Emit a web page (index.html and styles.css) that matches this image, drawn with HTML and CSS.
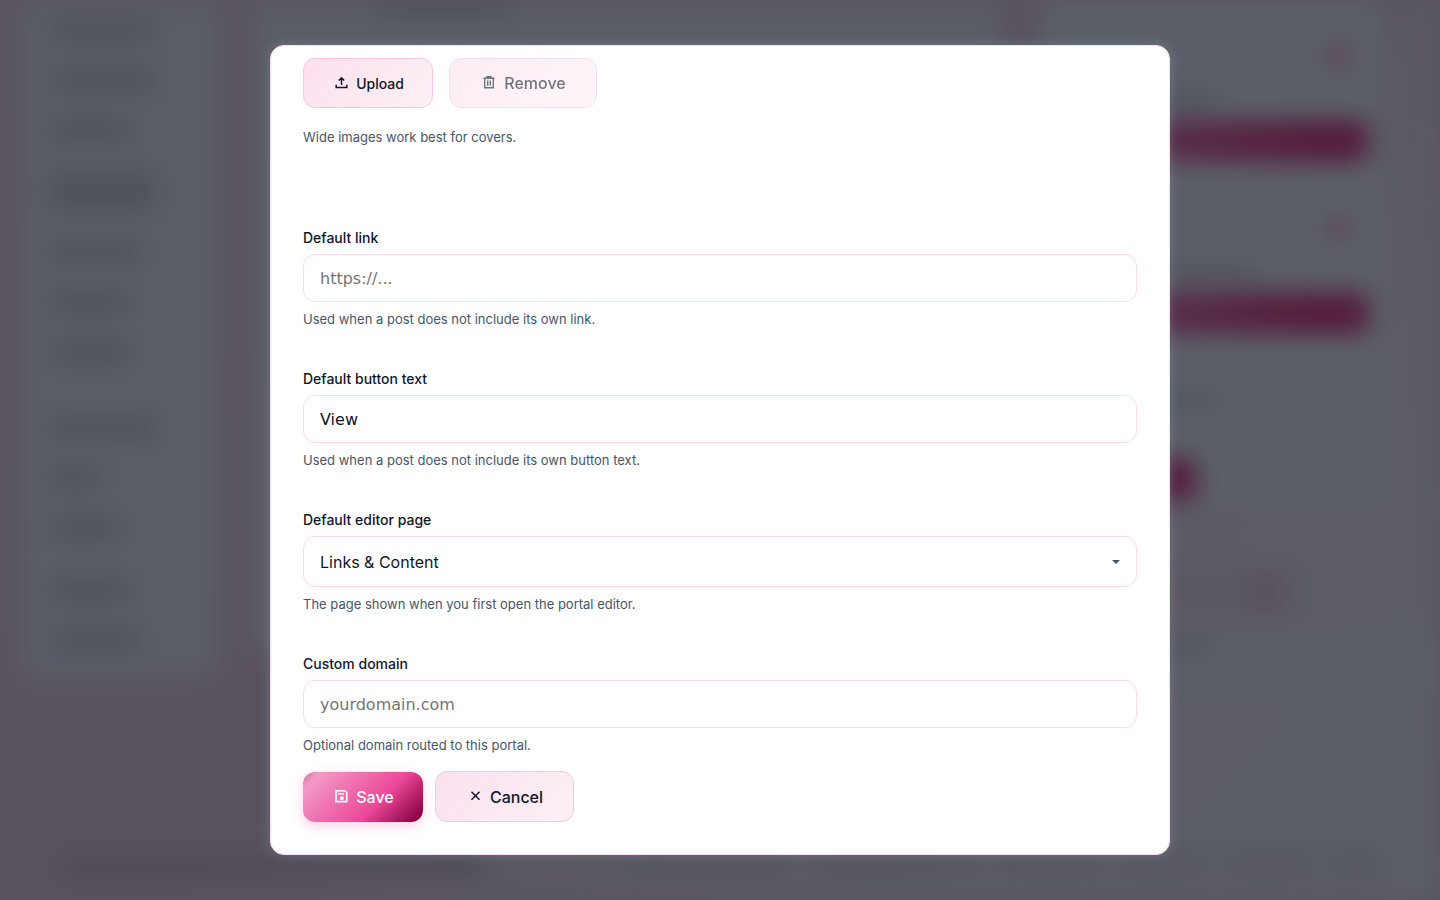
FILE: index.html
```
<!DOCTYPE html>
<html lang="en">
<head>
  <meta charset="UTF-8">
  <meta name="viewport" content="width=device-width, initial-scale=1">
  <title>Portal settings</title>
  <link rel="stylesheet" href="styles.css">
</head>
<body>
  <!-- page behind the dialog -->
  <div class="page" aria-hidden="true">
    <div class="columns">
      <div class="sidebar">
        <i class="bar w105"></i>
        <i class="bar w105"></i>
        <i class="bar w80"></i>
        <i class="bar w105 tall"></i>
        <i class="bar w90"></i>
        <i class="bar w80"></i>
        <i class="bar w80"></i>
        <i class="bar w105 section"></i>
        <i class="bar w50"></i>
        <i class="bar w70"></i>
        <i class="bar w80 group"></i>
        <i class="bar w90"></i>
      </div>
      <div class="main"><i class="bar w130"></i></div>
      <div class="aside">
        <div class="card">
          <i class="dot"></i>
          <i class="bar w130"></i>
          <i class="cta"></i>
        </div>
        <div class="card">
          <i class="dot"></i>
          <i class="bar w170"></i>
          <i class="cta"></i>
        </div>
        <div class="card last">
          <i class="bar w130"></i>
          <i class="cta short"></i>
        </div>
        <div class="pill"><i class="dot"></i></div>
        <div class="note"><i class="bar w130"></i></div>
      </div>
    </div>
    <div class="footer">
      <i class="bar grow"></i>
      <div class="links">
        <i class="bar w170"></i>
        <i class="bar w170"></i>
        <i class="bar w105"></i>
        <i class="bar w90"></i>
        <i class="bar w90"></i>
        <i class="bar w50"></i>
      </div>
    </div>
  </div>

  <div class="overlay">
    <form class="modal" role="dialog" aria-label="Portal settings">
      <div class="cover">
        <div class="cover-buttons">
          <button type="button" class="btn btn-upload">
            <svg class="icon" viewBox="0 0 14 14" fill="none" stroke="currentColor" stroke-width="1.5"><path d="M7.500 9V2M4.800 4.500L7.500 1.800l2.700 2.700M2.200 8.800v2.700h10.600V8.800"/></svg>
            Upload
          </button>
          <button type="button" class="btn" disabled>
            <svg class="icon" viewBox="0 0 14 14" fill="none" stroke="currentColor" stroke-width="1.4"><path d="M1.500 2.200h11M5 2V.8h4V2M2.700 2.500v9.300h8.600V2.500M5.700 4.500v5.300M8.300 4.500v5.300"/></svg>
            Remove
          </button>
        </div>
        <p class="hint">Wide images work best for covers.</p>
      </div>

      <div class="field">
        <label for="link">Default link</label>
        <input type="text" id="link" placeholder="https://...">
        <p class="hint">Used when a post does not include its own link.</p>
      </div>
      <div class="field">
        <label for="button-text">Default button text</label>
        <input type="text" id="button-text" value="View">
        <p class="hint">Used when a post does not include its own button text.</p>
      </div>
      <div class="field">
        <label for="editor-page">Default editor page</label>
        <div class="select">
          <select id="editor-page">
            <option>Links &amp; Content</option>
          </select>
        </div>
        <p class="hint">The page shown when you first open the portal editor.</p>
      </div>
      <div class="field">
        <label for="domain">Custom domain</label>
        <input type="text" id="domain" placeholder="yourdomain.com">
        <p class="hint">Optional domain routed to this portal.</p>
      </div>

      <div class="actions">
        <button type="submit" class="btn btn-save">
          <svg class="icon" viewBox="0 0 14 14" fill="none" stroke="currentColor" stroke-width="1.6"><path d="M2 .8h8.800l2 2v8.800H2z"/><path d="M4 3.800h6"/><circle cx="7.800" cy="8.300" r="1.200" fill="currentColor"/></svg>
          Save
        </button>
        <button type="button" class="btn btn-cancel">
          <svg class="icon" viewBox="0 0 14 14" fill="none" stroke="currentColor" stroke-width="1.5"><path d="M3.500 1.800l8 8M11.500 1.800l-8 8"/></svg>
          Cancel
        </button>
      </div>
    </form>
  </div>
</body>
</html>
```
FILE: styles.css
```
* {
  box-sizing: border-box;
}
body {
  margin: 0;
  min-height: 100vh;
  overflow: hidden;
  display: grid;
  font-family: Inter, "Liberation Sans", sans-serif;
  color: #0f172a;
  background: #5a535e;
}
p {
  margin: 0;
}

/* page behind the dialog */
.page, .overlay {
  grid-area: 1 / 1;
}
.page {
  height: 100vh;
  display: flex;
  flex-direction: column;
  justify-content: space-between;
  overflow: hidden;
  filter: blur(12px);
  background: linear-gradient(135deg, #5a5560 0%, #59525d 45%, #5b5b64 70%, #5b5e66 100%);
}
.columns {
  display: grid;
  grid-template-columns: 196px 1fr 400px;
  align-items: start;
  padding-left: 22px;
}
.bar {
  display: block;
  height: 16px;
  border-radius: 8px;
  background: #4a4e57;
}
.w50 { width: 50px; }
.w70 { width: 70px; }
.w80 { width: 80px; }
.w90 { width: 90px; }
.w105 { width: 105px; }
.w130 { width: 130px; }
.w170 { width: 170px; }
.sidebar {
  display: flex;
  flex-direction: column;
  gap: 34px;
  padding: 22px 28px 30px;
  background: #5a5d65;
  border-radius: 0 0 20px 20px;
}
.sidebar .tall {
  height: 38px;
  background: #4f525b;
}
.sidebar .section {
  margin-top: 26px;
}
.sidebar .group {
  margin-top: 12px;
}
.main {
  height: 650px;
  margin: 0 40px 0 36px;
  padding: 0 124px;
  background: #5a5d65;
}
.main .bar {
  height: 12px;
}
.aside .card {
  height: 172px;
  margin-right: 60px;
  padding: 42px 12px 0 50px;
  background: #5b5f67;
}
.aside .bar {
  margin: 22px 0 12px;
  background: #50545d;
}
.aside .dot {
  display: block;
  width: 28px;
  height: 28px;
  margin-left: auto;
  margin-right: 16px;
  border-radius: 50%;
  background: #5f4859;
}
.cta {
  display: block;
  height: 42px;
  border-radius: 12px;
  background: linear-gradient(90deg, #5a3550, #541c3c 80%);
}
.aside .last {
  height: 156px;
  padding-top: 26px;
}
.last .bar {
  margin: 22px 0 50px;
}
.cta.short {
  width: 106px;
}
.pill {
  width: 260px;
  margin: 66px 0 22px;
  padding: 12px 0;
  background: #5b5861;
}
.pill .dot {
  margin-right: 22px;
  background: #574b5b;
}
.note {
  height: 52px;
  padding-left: 40px;
  background: #5b5f67;
}
.note .bar {
  margin: 18px 0;
}
.footer {
  display: flex;
  gap: 140px;
  padding: 0 60px 26px;
}
.footer .bar {
  background: #4d4854;
}
.footer .grow {
  flex: 1;
}
.links {
  display: flex;
  gap: 16px;
}
.links .bar {
  background: #52535c;
}

/* dialog */
.overlay {
  z-index: 1;
  display: flex;
  align-items: center;
  justify-content: center;
}
.modal {
  width: 900px;
  max-width: 92vw;
  padding: 12px 32px 32px;
  background: #fff;
  border: 1px solid #fbdce8;
  border-radius: 14px;
  box-shadow: 0 0 12px rgba(148, 163, 184, 0.4);
}
.cover {
  margin-bottom: 79px;
}
.cover-buttons {
  display: flex;
  gap: 16px;
  margin-bottom: 19px;
}
.field {
  display: flex;
  flex-direction: column;
  margin-bottom: 38px;
}
label {
  margin-bottom: 6px;
  font-size: 14px;
  line-height: 21px;
  font-weight: 500;
}
.hint {
  font-size: 13px;
  line-height: 21px;
  color: #475569;
}
.field .hint {
  margin-top: 7px;
}
input, select {
  width: 100%;
  height: 48px;
  padding: 0 16px;
  border: 1px solid #fddbe7;
  border-radius: 12px;
  background: #fff;
  color: #0f172a;
  font-family: "DejaVu Sans", sans-serif;
  font-size: 16px;
}
input::placeholder {
  color: #757575;
}
.select {
  display: grid;
  align-items: center;
}
.select::after {
  content: "";
  grid-area: 1 / 1;
  justify-self: end;
  margin-right: 17px;
  border: 4px solid transparent;
  border-top-color: #475569;
  border-bottom: 0;
  pointer-events: none;
}
select {
  grid-area: 1 / 1;
  height: 51px;
  appearance: none;
  font-family: Inter, sans-serif;
}
.btn {
  display: flex;
  align-items: center;
  justify-content: center;
  gap: 8px;
  width: 148px;
  height: 50px;
  padding: 0 0 0 2px;
  border: 1px solid #f9c6de;
  border-radius: 12px;
  background: linear-gradient(135deg, #fce0ee, #fbf1f5);
  color: #0f172a;
  font-family: inherit;
  font-size: 16px;
  font-weight: 500;
}
.btn:disabled {
  opacity: 0.6;
}
.icon {
  width: 14px;
  height: 14px;
}
.btn-upload {
  width: 130px;
  font-size: 14px;
}
.actions {
  display: flex;
  align-items: center;
  gap: 12px;
  margin-top: -23px;
}
.btn-save {
  width: 120px;
  border: 0;
  color: #fff;
  background: linear-gradient(135deg, #c0709c 0%, #f29ac6 10%, #ec4899 62%, #86003f 96%);
  box-shadow: 0 4px 12px rgba(236, 72, 153, 0.25);
}
.btn-cancel {
  width: 139px;
  height: 51px;
}
```
